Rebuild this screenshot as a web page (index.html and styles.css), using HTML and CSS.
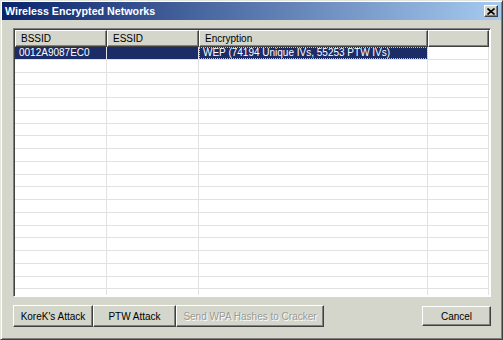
FILE: index.html
```html
<!DOCTYPE html>
<html lang="en">
    <head>
        <meta charset="UTF-8" />
        <title>Wireless Encrypted Networks</title>
        <link rel="stylesheet" href="styles.css">
    </head>
    <body>
        <div class="ventana">
            <div class="titulo">
                <span>Wireless Encrypted Networks</span>
                <button class="cerrar">
                    <svg width="8" height="7" viewBox="0 0 8 7">
                        <path d="M0.5 0.5 L7.5 6.5 M7.5 0.5 L0.5 6.5" stroke="#000" stroke-width="1.6" />
                    </svg>
                </button>
            </div>
            <div class="contenido">
                <div class="lista">
                    <div class="cabecera">
                        <div class="col c1">BSSID</div>
                        <div class="col c2">ESSID</div>
                        <div class="col c3">Encryption</div>
                        <div class="col c4"></div>
                    </div>
                    <div class="filas" id="filas">
                        <div class="fila sel">
                            <div class="celda c1">0012A9087EC0</div>
                            <div class="celda c2"></div>
                            <div class="celda c3">WEP (74194 Unique IVs, 55253 PTW IVs)</div>
                            <div class="celda c4"></div>
                        </div>
                    </div>
                </div>
                <div class="botones">
                    <button class="boton">KoreK's Attack</button>
                    <button class="boton">PTW Attack</button>
                    <button class="boton desactivado" disabled>Send WPA Hashes to Cracker</button>
                    <button class="boton cancelar">Cancel</button>
                </div>
            </div>
        </div>
        <script>
            //filas vacias de la lista
            let filas = document.getElementById("filas");
            for(let i = 0; i < 19; i++){
                let f = document.createElement("div");
                f.className = "fila";
                f.innerHTML = '<div class="celda c1"></div><div class="celda c2"></div><div class="celda c3"></div><div class="celda c4"></div>';
                filas.appendChild(f);
            }
        </script>
    </body>
</html>
```

FILE: styles.css
```css
*{
    margin: 0;
    padding: 0;
    box-sizing: border-box;
}
body{
    font-family: "Liberation Sans", Arial, sans-serif;
    font-size: 10px;
    background-color: #d4d6cb;
}
.ventana{
    width: 503px;
    height: 340px;
    display: flex;
    flex-direction: column;
    background-color: #d4d6cb;
    border: 1px solid;
    border-color: #e4e6dc #404040 #404040 #e4e6dc;
    box-shadow: inset 1px 1px #ffffff, inset -1px -1px #808080;
    padding: 1px;
}
.titulo{
    height: 18px;
    display: flex;
    align-items: center;
    justify-content: space-between;
    padding: 0 3px 0 3px;
    background: linear-gradient(to right, #0a246a, #a6caf0);
    color: #ffffff;
    font-weight: bold;
    font-size: 10.7px;
}
.cerrar{
    width: 14px;
    height: 12px;
    display: flex;
    align-items: center;
    justify-content: center;
    background-color: #d4d6cb;
    border: 1px solid;
    border-color: #ffffff #404040 #404040 #ffffff;
    box-shadow: inset -1px -1px #808080;
}
.contenido{
    flex: 1;
    display: flex;
    flex-direction: column;
    padding: 8px 10px 11px 11px;
    gap: 8px;
}
.lista{
    height: 269px;
    border: 1px solid;
    border-color: #808080 #ffffff #ffffff #808080;
    box-shadow: inset 1px 1px #404040;
    padding: 1px 1px 1px 1px;
    background-color: #ffffff;
    overflow: hidden;
    display: flex;
    flex-direction: column;
}
.cabecera{
    display: flex;
    height: 17px;
    flex-shrink: 0;
}
.col{
    height: 17px;
    line-height: 15px;
    padding-left: 5px;
    background-color: #d4d6cb;
    border: 1px solid;
    border-color: #ffffff #404040 #404040 #ffffff;
    box-shadow: inset -1px -1px #808080;
    color: #000000;
}
.c1{ width: 92px; }
.c2{ width: 92px; }
.c3{ width: 229px; }
.c4{ flex: 1; }
.filas{
    flex: 1;
    overflow: hidden;
}
.fila{
    display: flex;
    height: 12.76px;
    border-bottom: 1px solid #e2e2e2;
}
.celda{
    height: 100%;
    line-height: 12px;
    padding-left: 4px;
    border-right: 1px solid #e2e2e2;
    white-space: nowrap;
    overflow: hidden;
}
.fila.sel .c1, .fila.sel .c2, .fila.sel .c3{
    background-color: #1c2c66;
    color: #ffffff;
}
.fila.sel .c3{
    outline: 1px dotted #c8c8a0;
    outline-offset: -1px;
}
.botones{
    display: flex;
    height: 22px;
}
.boton{
    height: 22px;
    font-family: "Liberation Sans", Arial, sans-serif;
    font-size: 10px;
    color: #000000;
    background-color: #d4d6cb;
    border: 1px solid;
    border-color: #ffffff #404040 #404040 #ffffff;
    box-shadow: inset -1px -1px #808080;
}
.boton:nth-child(1){ width: 80px; }
.boton:nth-child(2){ width: 83px; }
.boton:nth-child(3){ width: 148px; }
.desactivado{
    color: #9a9a94;
    text-shadow: 1px 1px #ffffff;
}
.cancelar{
    width: 69px;
    height: 20px;
    margin-top: 1px;
    margin-left: auto;
}
```
